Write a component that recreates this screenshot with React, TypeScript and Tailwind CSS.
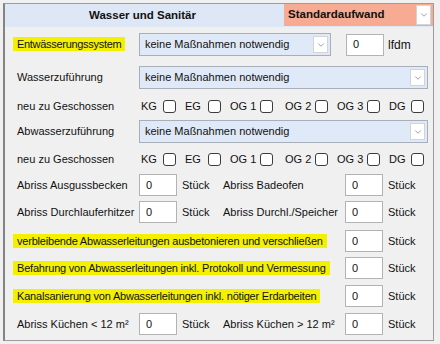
import { ChevronDown } from "lucide-react";

const font = { fontFamily: '"Liberation Sans", Arial, sans-serif' };

function DropBtn({ className = "" }: { className?: string }) {
  return (
    <div className={`flex h-[17px] w-[15px] items-center justify-center border border-[#d4d4d4] bg-white ${className}`}>
      <ChevronDown size={10} strokeWidth={1.5} className="text-[#6b6b6b]" />
    </div>
  );
}

function Combo({ w }: { w: string }) {
  return (
    <div className={`flex h-[23px] items-center justify-between border border-[#a9afb8] bg-[#e0e9f7] pl-[5px] pr-[2px] ${w}`}>
      <span>keine Maßnahmen notwendig</span>
      <DropBtn />
    </div>
  );
}

function NumBox() {
  return (
    <div className="flex h-[22px] w-[38px] items-center border border-[#b3b3b3] bg-white pl-[6px]">0</div>
  );
}

function Check() {
  return <div className="h-[13px] w-[13px] rounded-[3px] border border-[#3c3c3c] bg-white" />;
}

const floors = [
  { name: "KG", w: "w-[35px]", ml: "ml-0" },
  { name: "EG", w: "w-[36px]", ml: "ml-[9px]" },
  { name: "OG 1", w: "w-[43px]", ml: "ml-[9px]" },
  { name: "OG 2", w: "w-[43px]", ml: "ml-[12px]" },
  { name: "OG 3", w: "w-[43px]", ml: "ml-[9px]" },
  { name: "DG", w: "w-[35px]", ml: "ml-[9px]" },
];

function Floors({ className }: { className: string }) {
  return (
    <div className={`flex h-[22px] items-center pl-[12px] ${className}`}>
      <span className="w-[124px]">neu zu Geschossen</span>
      <div className="flex items-center">
        {floors.map((f) => (
          <div key={f.name} className={`flex items-center justify-between ${f.w} ${f.ml}`}>
            <span>{f.name}</span>
            <Check />
          </div>
        ))}
      </div>
    </div>
  );
}

function PairRow({ left, right, className }: { left: string; right: string; className: string }) {
  return (
    <div className={`flex h-[22px] items-center pl-[12px] ${className}`}>
      <span className="w-[122px]">{left}</span>
      <NumBox />
      <span className="ml-[5px] w-[41px]">Stück</span>
      <span className="w-[122px]">{right}</span>
      <NumBox />
      <span className="ml-[5px]">Stück</span>
    </div>
  );
}

function MarkedRow({ text, className }: { text: string; className: string }) {
  return (
    <div className={`flex h-[22px] items-center pl-[8px] ${className}`}>
      <span className="w-[332px]">
        <span className="bg-[#f3f000] px-[4px] py-[1px] tracking-[-0.2px]">{text}</span>
      </span>
      <NumBox />
      <span className="ml-[5px]">Stück</span>
    </div>
  );
}

export default function App() {
  return (
    <div className="h-[344px] w-[440px] bg-[#f0f0f0] pl-[3px] pt-[3px] text-[11px] text-[#111]" style={font}>
      <div className="flex h-[338px] w-[431px] flex-col border border-l-2 border-[#9c9c9c] border-l-[#848484] bg-[#f0f0f0]">
        <div className="flex h-[23px] bg-[#dde7f5]">
          <div className="flex flex-1 items-center justify-center pr-[4px] text-[11.5px] font-bold">Wasser und Sanitär</div>
          <div className="mb-[1px] flex w-[149px] items-center justify-between bg-[#f6ab92] pl-[4px] pr-[2px]">
            <span className="text-[11.5px] font-bold">Standardaufwand</span>
            <DropBtn className="h-[20px]" />
          </div>
        </div>

        <div className="mt-[6px] flex h-[23px] items-center pl-[8px]">
          <span className="w-[126px]">
            <span className="bg-[#f3f000] px-[4px] py-[1px] tracking-[-0.3px]">Entwässerungssystem</span>
          </span>
          <Combo w="w-[192px]" />
          <div className="ml-[15px]">
            <NumBox />
          </div>
          <span className="ml-[4px] text-[12px]">lfdm</span>
        </div>

        <div className="mt-[10px] flex h-[23px] items-center pl-[12px]">
          <span className="w-[122px]">Wasserzuführung</span>
          <Combo w="w-[289px]" />
        </div>

        <Floors className="mt-[6px]" />

        <div className="mt-[3px] flex h-[23px] items-center pl-[12px]">
          <span className="w-[122px]">Abwasserzuführung</span>
          <Combo w="w-[289px]" />
        </div>

        <Floors className="mt-[5px]" />

        <PairRow className="mt-[4px]" left="Abriss Ausgussbecken" right="Abriss Badeofen" />
        <PairRow className="mt-[5px]" left="Abriss Durchlauferhitzer" right="Abriss Durchl./Speicher" />

        <MarkedRow className="mt-[7px]" text="verbleibende Abwasserleitungen ausbetonieren und verschließen" />
        <MarkedRow className="mt-[5px]" text="Befahrung von Abwasserleitungen inkl. Protokoll und Vermessung" />
        <MarkedRow className="mt-[6px]" text="Kanalsanierung von Abwasserleitungen inkl. nötiger Erdarbeiten" />

        <PairRow className="mt-[6px]" left="Abriss Küchen < 12 m²" right="Abriss Küchen > 12 m²" />
      </div>
    </div>
  );
}
